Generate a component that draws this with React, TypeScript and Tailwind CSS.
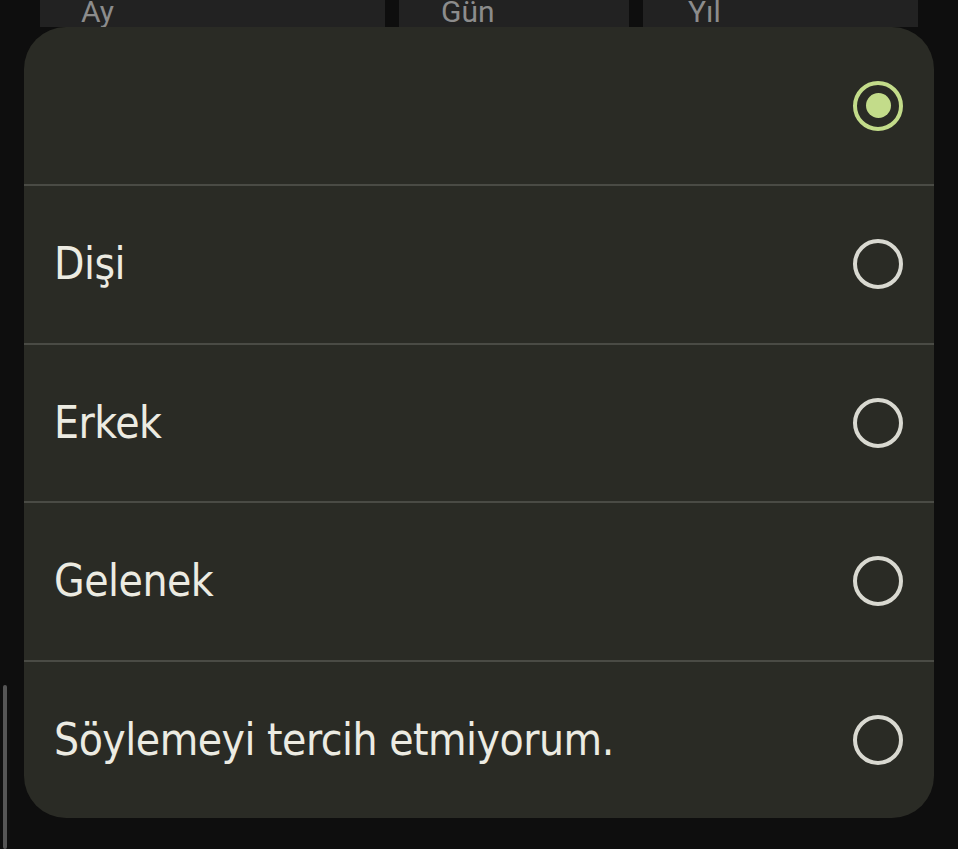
import React, { useState } from 'react';

const options = ['', 'Dişi', 'Erkek', 'Gelenek', 'Söylemeyi tercih etmiyorum.'];

const Radio: React.FC<{ checked: boolean }> = ({ checked }) => (
  <span
    className={`flex h-[50px] w-[50px] items-center justify-center rounded-full border-[4px] ${
      checked ? 'border-[#c3dc8a]' : 'border-[#d9d9d1]'
    }`}
  >
    {checked && <span className="h-[25px] w-[25px] rounded-full bg-[#c3dc8a]" />}
  </span>
);

export default function App() {
  const [selected, setSelected] = useState(0);

  return (
    <div className="relative h-[849px] w-[958px] overflow-hidden bg-[#0e0e0e] font-['DejaVu_Sans_Condensed','DejaVu_Sans',sans-serif]">
      {/* date fields behind the sheet */}
      <div className="flex h-[27px] gap-[14px] px-[40px] font-['Roboto',sans-serif] text-[30px] leading-none text-[#8c8c8c]">
        <div className="flex w-[345px] items-end overflow-hidden bg-[#222222] pl-[41px]">Ay</div>
        <div className="flex w-[230px] items-end overflow-hidden bg-[#222222] pl-[42px]">Gün</div>
        <div className="flex flex-1 items-end overflow-hidden bg-[#222222] pl-[45px]">Yıl</div>
      </div>

      {/* gender sheet */}
      <div className="mx-[24px] overflow-hidden rounded-[42px] bg-[#2a2b25]">
        {options.map((label, i) => (
          <button
            key={i}
            onClick={() => setSelected(i)}
            className={`flex w-full items-center justify-between pl-[30px] pr-[31px] text-left ${
              i === 0 ? 'h-[157px]' : 'h-[158.5px] border-t-2 border-[#4a4b45]'
            }`}
          >
            <span className="text-[44px] leading-none tracking-[-0.5px] text-[#ecebe2]">{label}</span>
            <Radio checked={selected === i} />
          </button>
        ))}
      </div>

      {/* scroll indicator */}
      <div className="absolute bottom-0 left-[3px] h-[164px] w-[4px] rounded-full bg-[#555555]" />
    </div>
  );
}
